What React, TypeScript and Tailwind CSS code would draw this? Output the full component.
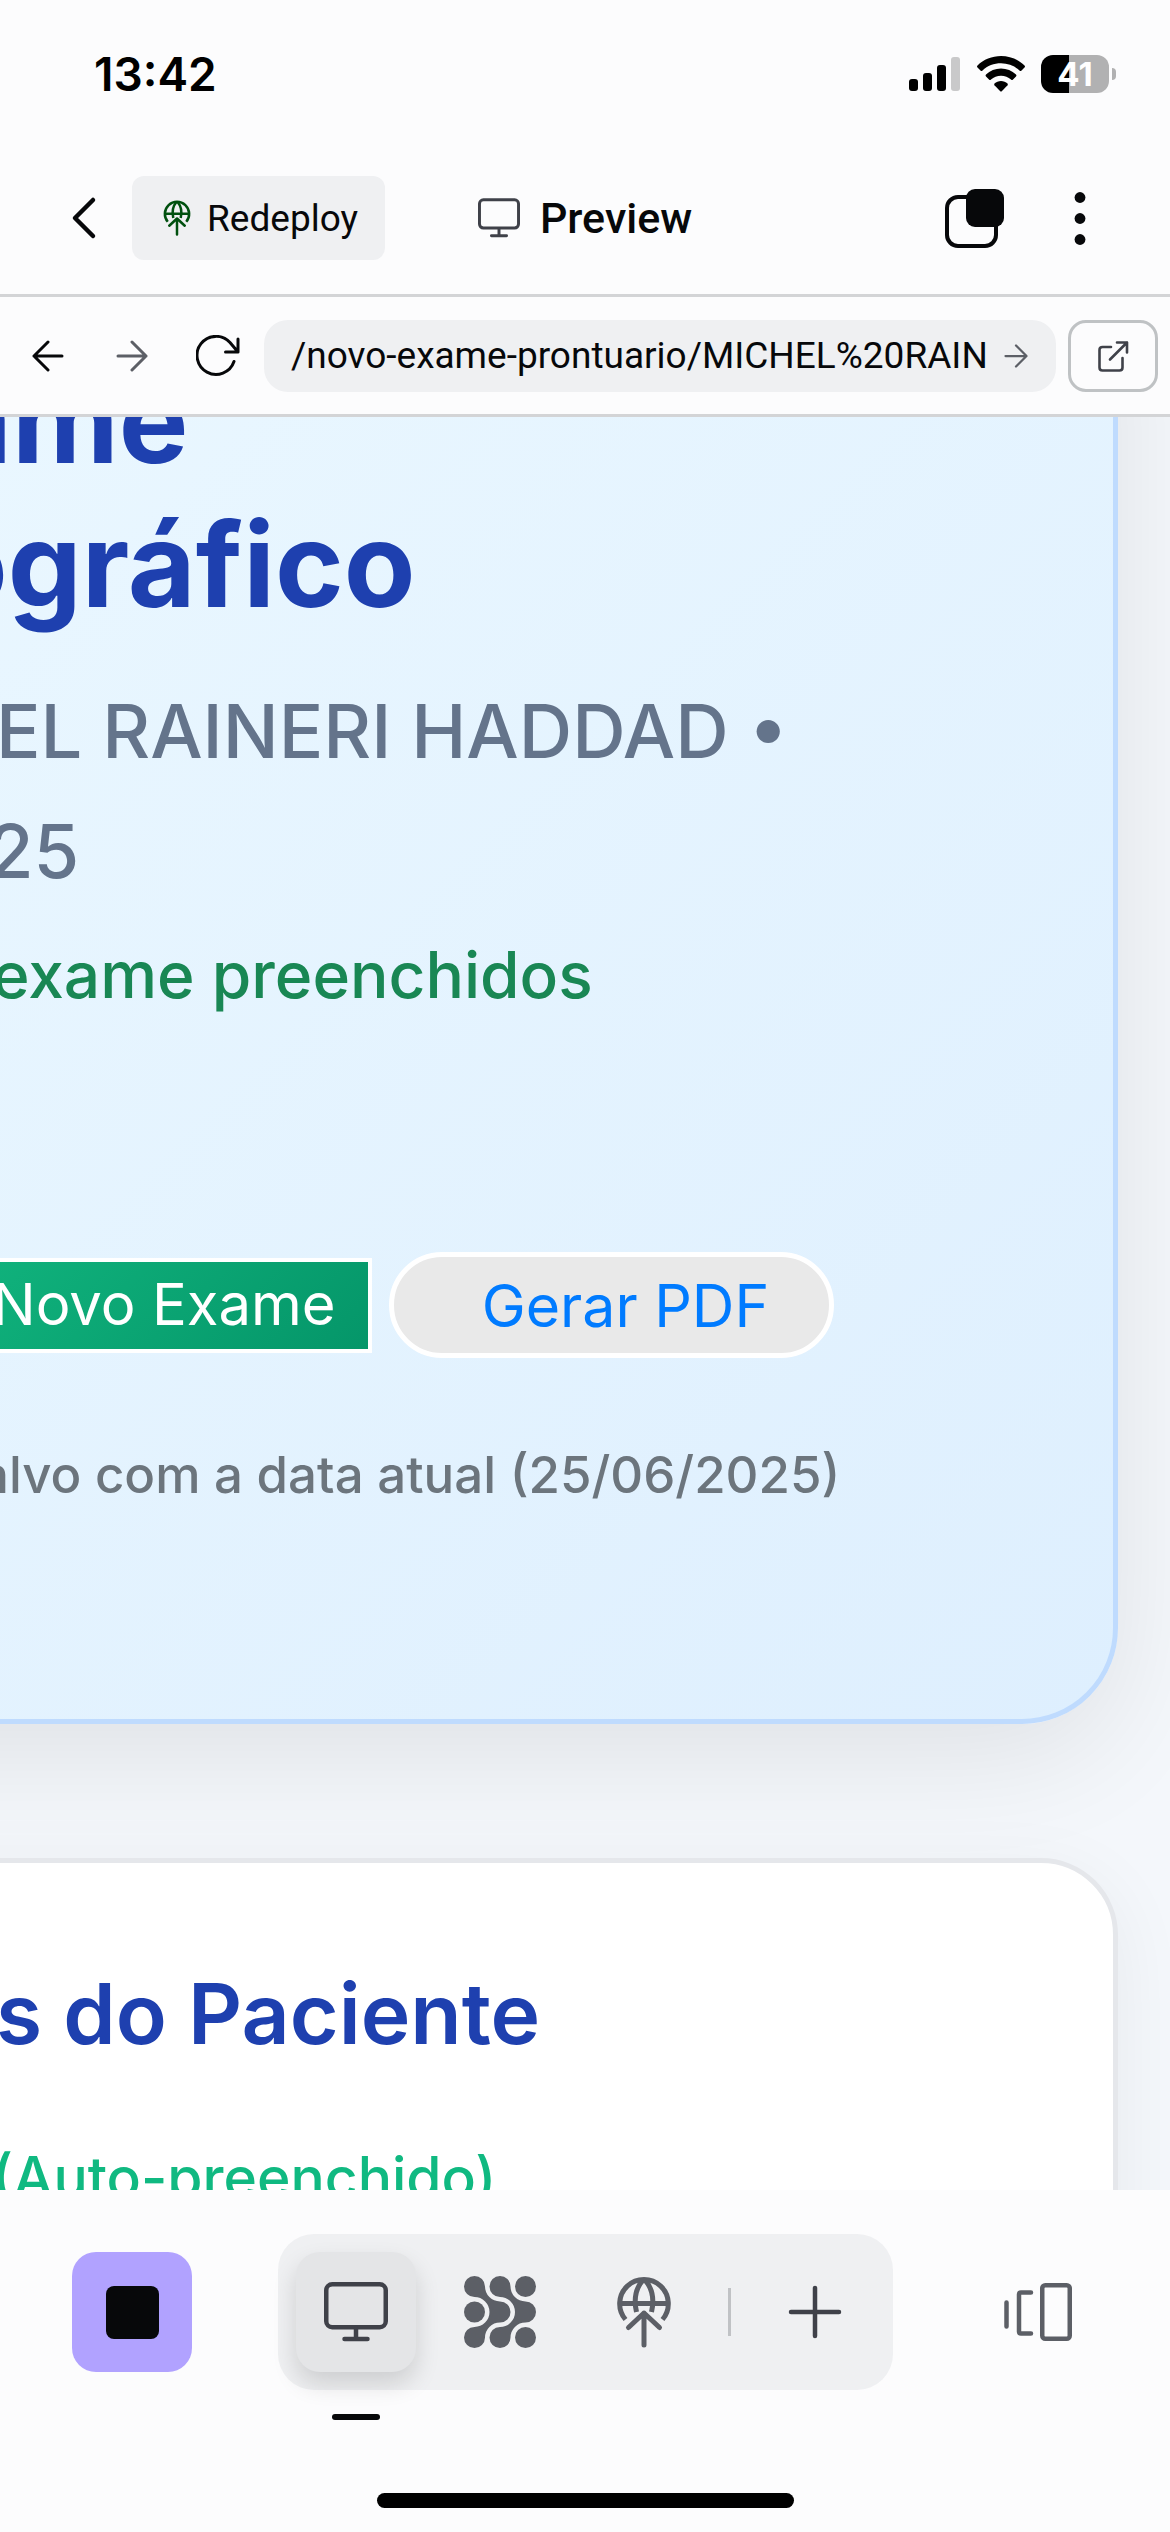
import type { ReactNode } from "react";

function GlobeUpIcon({ className }: { className: string }) {
  return (
    <svg viewBox="0 0 72 72" fill="none" stroke="currentColor" strokeWidth="5" className={className} aria-hidden="true">
      <path d="M17.5 43.5A24.3 24.3 0 1 1 54.5 43.5" />
      <path d="M12 27.5H60" />
      <path d="M35 4C27 13 26 25 28.500 36M37 4C45 13 46 25 43.500 36" />
      <path d="M36 37V69M20.500 51.500L36 37L51.500 51.500" strokeLinecap="round" strokeLinejoin="round" />
    </svg>
  );
}

function MonitorIcon({ className }: { className: string }) {
  return (
    <svg viewBox="0 0 64 60" fill="none" stroke="currentColor" strokeWidth="4.5" strokeLinecap="round" className={className} aria-hidden="true">
      <rect x="2.25" y="2.25" width="59.5" height="43" rx="6" />
      <path d="M32 46V57M20.500 57H43.500" />
    </svg>
  );
}

function AgentIcon({ className }: { className: string }) {
  const strand =
    "M10.5 21A15 15 0 0 1 10.5 51A10.5 10.5 0 1 0 21 61.5A15 15 0 0 1 36 46.5A10.5 10.5 0 0 0 36 25.5A15 15 0 0 1 21 10.5A10.5 10.5 0 1 0 10.5 21Z";
  return (
    <svg viewBox="0 0 72 72" fill="currentColor" className={className} aria-hidden="true">
      <path d={strand} />
      <path d={strand} transform="translate(25.5 0)" />
      <circle cx="61.5" cy="10.5" r="10.5" />
      <circle cx="10.5" cy="36" r="10.5" />
      <circle cx="61.5" cy="61.5" r="10.5" />
    </svg>
  );
}

function ArrowIcon({ className, back = false }: { className: string; back?: boolean }) {
  return (
    <svg viewBox="0 0 32 32" fill="none" stroke="currentColor" strokeWidth="3" strokeLinecap="round" strokeLinejoin="round" className={className} aria-hidden="true">
      <path d={back ? "M30 16H2M16 2L2 16L16 30" : "M2 16H30M16 2L30 16L16 30"} />
    </svg>
  );
}

function StatusBar() {
  return (
    <div className="flex h-[148px] items-center justify-between pr-[54px] pl-[94px]">
      <span className="text-[46px] leading-none font-semibold text-black">13:42</span>
      <div className="flex items-center gap-4">
        <svg viewBox="0 0 52 36" className="h-9 w-[52px]" aria-label="Signal" role="img">
          <rect x="0" y="23" width="9" height="12" rx="3" />
          <rect x="14" y="17" width="9" height="18" rx="3" />
          <rect x="28" y="9" width="9" height="26" rx="3" />
          <rect x="42" y="1" width="9" height="34" rx="3" fill="#c9c9ca" />
        </svg>
        <svg viewBox="0 0 48 36" className="h-9 w-12" aria-label="Wi-Fi" role="img">
          <path d="M24 0C33 0 41.500 3.500 47.500 9.500Q48.500 10.500 47.500 11.500L44.500 14.500Q43.500 15.500 42.500 14.500C37.500 9.800 31 7.300 24 7.300S10.500 9.800 5.500 14.500Q4.500 15.500 3.500 14.500L.5 11.500Q-.5 10.500 .5 9.500C6.500 3.500 15 0 24 0Z" />
          <path d="M24 12.500C29.700 12.500 35 14.700 39 18.500Q40 19.500 39 20.500L36 23.500Q35 24.500 34 23.500C31.300 21 27.800 19.700 24 19.700S16.700 21 14 23.500Q13 24.500 12 23.500L9 20.500Q8 19.500 9 18.500C13 14.700 18.300 12.500 24 12.500Z" />
          <path d="M24 25C26.500 25 28.800 25.900 30.500 27.500Q31.300 28.300 30.500 29.200L25 35Q24 36 23 35L17.500 29.200Q16.700 28.300 17.500 27.500C19.200 25.900 21.500 25 24 25Z" />
        </svg>
        <div className="flex items-center gap-[3px]">
          <div className="flex h-[38px] w-[68px] items-center justify-center rounded-xl bg-[linear-gradient(to_right,#000_41%,#b1b1b2_41%)] text-[33px] leading-none font-bold text-white">
            41
          </div>
          <div className="h-3 w-1 rounded-r-full bg-[#b1b1b2]" />
        </div>
      </div>
    </div>
  );
}

function AppHeader() {
  return (
    <header className="grid h-[149px] grid-cols-[1fr_auto_1fr] items-center border-b-3 border-[#d3d4d6] pb-[6px] font-[Roboto,sans-serif] text-[#07080a]">
      <div className="flex items-center gap-[34px] pl-[70px]">
        <button aria-label="Back">
          <svg viewBox="0 0 28 44" fill="none" stroke="currentColor" strokeWidth="4.5" strokeLinecap="round" strokeLinejoin="round" className="h-11 w-7">
            <path d="M23 4L5 22L23 40" />
          </svg>
        </button>
        <button className="flex h-[84px] items-center gap-3 rounded-xl bg-[#eff0f2] px-[27px] text-[37px] leading-none">
          <GlobeUpIcon className="size-9 text-[#00500f]" />
          Redeploy
        </button>
      </div>
      <div className="flex items-center gap-5">
        <MonitorIcon className="h-10 w-[42px] text-[#3f4149]" />
        <h1 className="text-[43px] leading-none font-medium">Preview</h1>
      </div>
      <div className="flex items-center justify-end gap-[66px] pr-[80px]">
        <button aria-label="Tabs">
          <svg viewBox="0 0 59 59" className="size-[59px]">
            <rect x="2" y="8" width="49" height="49" rx="11" fill="none" stroke="currentColor" strokeWidth="4" />
            <rect x="21" y="0" width="38" height="38" rx="9" fill="currentColor" />
          </svg>
        </button>
        <button aria-label="More">
          <svg viewBox="0 0 20 59" fill="currentColor" className="h-[59px] w-5">
            <circle cx="10" cy="8.500" r="5.400" />
            <circle cx="10" cy="29.500" r="5.400" />
            <circle cx="10" cy="50.500" r="5.400" />
          </svg>
        </button>
      </div>
    </header>
  );
}

function AddressBar() {
  return (
    <nav className="flex h-[120px] items-center border-b-3 border-[#d3d4d6] pr-3 font-[Roboto,sans-serif] text-[#07080a]">
      <div className="flex w-[264px] shrink-0 items-center">
        <button aria-label="Previous page" className="flex w-24 justify-center">
          <ArrowIcon back className="size-8" />
        </button>
        <button aria-label="Next page" className="flex w-[72px] justify-center text-[#5c5f66]">
          <ArrowIcon className="size-8" />
        </button>
        <button aria-label="Reload" className="flex w-24 justify-center pl-1">
          <svg viewBox="0 0 44 42" fill="none" stroke="currentColor" strokeWidth="3" strokeLinecap="round" strokeLinejoin="round" className="h-[42px] w-11">
            <path d="M38 26.500A19 19 0 1 1 34 7.500L42 17M42 4V17H29.500" />
          </svg>
        </button>
      </div>
      <div className="flex h-[72px] min-w-0 flex-1 items-center gap-4 rounded-3xl bg-[#eff0f2] pr-7 pl-[27px]">
        <input
          aria-label="Address"
          defaultValue="/novo-exame-prontuario/MICHEL%20RAIN"
          className="min-w-0 flex-1 bg-transparent text-[37px] leading-none outline-none"
        />
        <button aria-label="Go" className="text-[#5c5f66]">
          <ArrowIcon className="size-6" />
        </button>
      </div>
      <button aria-label="Open in new tab" className="ml-3 flex h-[72px] w-[90px] shrink-0 items-center justify-center rounded-[18px] border-3 border-[#bfc2c4] text-[#3f4149]">
        <svg viewBox="0 0 32 32" fill="none" stroke="currentColor" strokeWidth="2.600" strokeLinecap="round" strokeLinejoin="round" className="size-8">
          <path d="M14 7H5.500Q2.500 7 2.500 10V27.500Q2.500 30.500 5.500 30.500H22.500Q25.500 30.500 25.500 27.500V18M20 2.500H30V12.500M30 2.500L13 19.500" />
        </svg>
      </button>
    </nav>
  );
}

function ExamPage() {
  return (
    <main className="min-h-0 flex-1 overflow-hidden bg-[#f4f7fb] whitespace-nowrap">
      <section className="-mt-[200px] mr-[52px] -ml-[200px] rounded-r-[96px] border-5 border-[#bfdbfe] bg-linear-135 from-[#ebf8ff] to-[#deeffe] pt-[127px] pb-[204px] pl-[195px] shadow-[0_30px_120px_rgba(0,0,0,0.09)]">
        <h2 className="text-[117px] leading-[144px] font-bold text-[#1e40af]">
          <span className="-ml-14 block">ame</span>
          <span className="-ml-16 block">ográfico</span>
        </h2>
        <p className="mt-[34px] text-[74px] leading-[120px] font-medium text-[#64748b]">
          <span className="-ml-1 block">EL RAINERI HADDAD •</span>
          <span className="-ml-3 block">25</span>
        </p>
        <p className="mt-[14px] -ml-2 text-[64px] leading-[100px] font-medium text-[#198754]">exame preenchidos</p>
        <div className="mt-[227px] flex items-center gap-[17px]">
          <button className="-ml-6 h-[95px] border-4 border-white bg-linear-135 from-[#10b27c] to-[#059669] pr-8 pb-[2px] pl-3 text-[58px] leading-none text-white">
            Novo Exame
          </button>
          <button className="h-[106px] rounded-full border-5 border-white bg-[#e9e9e9] pr-[60px] pl-[88px] text-[59px] leading-none text-[#007bff]">
            Gerar PDF
          </button>
        </div>
        <p className="mt-[77px] -ml-5 text-[51px] leading-[80px] font-medium text-[#6c757d]">
          alvo com a data atual (25/06/2025)
        </p>
      </section>
      <section className="mt-[134px] mr-[52px] -ml-[200px] rounded-tr-[77px] border-5 border-[#e5e7eb] bg-white pt-[99px] pb-[200px] pl-[195px] shadow-[0_19px_77px_rgba(0,0,0,0.06)]">
        <h2 className="-ml-1 text-[84px] leading-[104px] font-semibold text-[#1e40af]">s do Paciente</h2>
        <p className="mt-[68px] -ml-2 text-[57px] leading-[88px] font-medium text-[#10b981]">(Auto-preenchido)</p>
      </section>
    </main>
  );
}

function DockTab({ label, active = false, children }: { label: string; active?: boolean; children: ReactNode }) {
  return (
    <button
      aria-label={label}
      className={
        active
          ? "relative flex size-[120px] items-center justify-center rounded-3xl bg-[#e4e5e7] text-[#3f4149] shadow-[0_12px_24px_rgba(0,0,0,0.14)]"
          : "flex size-[120px] items-center justify-center text-[#5c5f66]"
      }
    >
      {children}
      {active && <span className="absolute -bottom-12 h-[6px] w-12 rounded-full bg-[#07080a]" />}
    </button>
  );
}

function Dock() {
  return (
    <footer className="relative flex h-[342px] shrink-0 flex-col items-center bg-[#fcfcfd] pt-11">
      <div className="flex w-full items-center justify-between px-[72px]">
        <button aria-label="Stop" className="flex size-[120px] items-center justify-center rounded-3xl bg-[#b1a2ff]">
          <span className="size-[53px] rounded-lg bg-[#07080a]" />
        </button>
        <div className="flex h-[156px] items-center gap-6 rounded-[36px] bg-[#eff0f2] px-[18px]">
          <DockTab label="Preview" active>
            <MonitorIcon className="h-[60px] w-16" />
          </DockTab>
          <DockTab label="Agent">
            <AgentIcon className="size-[72px]" />
          </DockTab>
          <DockTab label="Deploy">
            <GlobeUpIcon className="size-[72px]" />
          </DockTab>
          <span className="h-12 w-[3px] bg-[#c0c2c5]" />
          <DockTab label="New tab">
            <svg viewBox="0 0 54 54" fill="none" stroke="#3f4149" strokeWidth="4.500" strokeLinecap="round" className="size-[54px]">
              <path d="M27 3V51M3 27H51" />
            </svg>
          </DockTab>
        </div>
        <button aria-label="Switch tabs" className="flex size-[120px] items-center justify-center text-[#5c5f66]">
          <svg viewBox="0 0 68 58" fill="none" stroke="currentColor" strokeWidth="4.500" strokeLinecap="round" strokeLinejoin="round" className="h-[58px] w-[68px]">
            <path d="M2.500 19.500V43.500M27 9.500H17Q15 9.500 15 11.500V48.500Q15 50.500 17 50.500H27" />
            <rect x="38.250" y="2.250" width="27.500" height="53.500" rx="3" />
          </svg>
        </button>
      </div>
      <div className="mt-auto mb-6 h-[15px] w-[417px] rounded-full bg-black" />
    </footer>
  );
}

export default function App() {
  return (
    <div className="flex h-screen w-full flex-col overflow-hidden bg-[#fcfcfd] font-[Inter,sans-serif]">
      <StatusBar />
      <AppHeader />
      <AddressBar />
      <ExamPage />
      <Dock />
    </div>
  );
}
